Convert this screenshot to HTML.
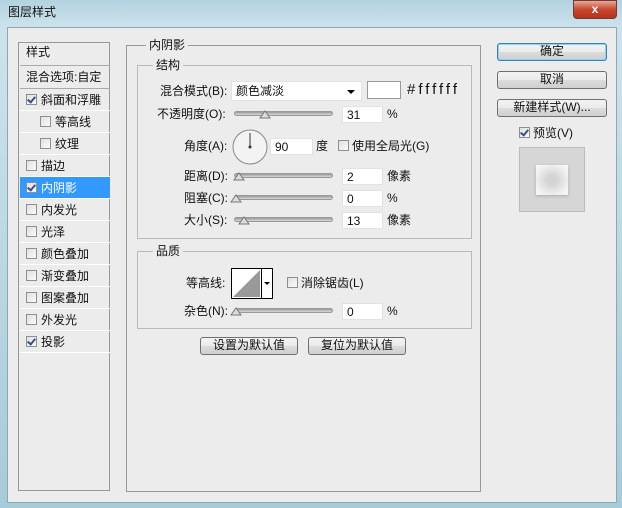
<!DOCTYPE html>
<html><head><meta charset="utf-8"><style>
*{box-sizing:border-box;margin:0;padding:0}
body{width:622px;height:508px;overflow:hidden;position:relative;background:linear-gradient(180deg,#b3d3e0 0,#cde3ec 28px,#a6cbd9 100%);font-family:"Liberation Sans","Noto Sans CJK SC",sans-serif;font-size:12px;color:#111}
.a{position:absolute}
.t{position:absolute;white-space:nowrap;line-height:14px}
.inner{position:absolute;left:7px;top:27px;width:610px;height:476px;background:#ececec;border:1px solid #8fa7b3}
.cb{position:absolute;width:11px;height:11px;border:1px solid #8e8f8f;background:linear-gradient(135deg,#e0e0e0,#fafafa)}
.cb.on::after{content:"";position:absolute;left:2px;top:0px;width:3px;height:6px;border:solid #3a4f8f;border-width:0 2px 2px 0;transform:rotate(40deg)}
.inp{position:absolute;background:#fff;border:1px solid #e2e2e2;height:17px;padding-left:4px;line-height:16px;font-size:12px}
.sl{position:absolute;height:5px;border-radius:3px;background:linear-gradient(#9a9a9a,#d8d8d8);border:1px solid #999}
.btn{position:absolute;border:1px solid #707070;border-radius:3px;background:linear-gradient(#f2f2f2 0,#ebebeb 50%,#dcdcdc 51%,#cfcfcf);text-align:center;line-height:15px}
.grp{position:absolute;border:1px solid #b9b9b9}
.row{position:absolute;left:1px;width:90px;height:22px;border-bottom:1px solid #fff}
</style></head><body>
<div class="t" style="left:8px;top:5px;font-size:12px">图层样式</div>
<div class="a" style="left:573px;top:0;width:44px;height:19px;border-radius:0 0 4px 4px;background:linear-gradient(#e8a99a,#c9462f 50%,#b8321c);border:1px solid #6d3d35;color:#fff;text-align:center;font-weight:bold;line-height:16px">x</div>
<div class="inner"></div>
<div class="a" style="left:18px;top:42px;width:92px;height:449px;border:1px solid #999;background:#ececec">
<div class="row" style="top:0;height:23px;border-bottom:1px solid #aaa"><span class="t" style="left:6px;top:2px">样式</span></div>
<div class="row" style="top:23px;height:23px;border-bottom:1px solid #aaa"><span class="t" style="left:6px;top:4px">混合选项:自定</span></div>
<div class="row" style="top:46px"><span class="cb on" style="left:6px;top:5px"></span><span class="t" style="left:21px;top:4px">斜面和浮雕</span></div>
<div class="row" style="top:68px"><span class="cb" style="left:20px;top:5px"></span><span class="t" style="left:35px;top:4px">等高线</span></div>
<div class="row" style="top:90px"><span class="cb" style="left:20px;top:5px"></span><span class="t" style="left:35px;top:4px">纹理</span></div>
<div class="row" style="top:112px"><span class="cb" style="left:6px;top:5px"></span><span class="t" style="left:21px;top:4px">描边</span></div>
<div class="row" style="top:134px;background:#3399ff;color:#fff"><span class="cb on" style="left:6px;top:5px"></span><span class="t" style="left:21px;top:4px">内阴影</span></div>
<div class="row" style="top:156px"><span class="cb" style="left:6px;top:5px"></span><span class="t" style="left:21px;top:4px">内发光</span></div>
<div class="row" style="top:178px"><span class="cb" style="left:6px;top:5px"></span><span class="t" style="left:21px;top:4px">光泽</span></div>
<div class="row" style="top:200px"><span class="cb" style="left:6px;top:5px"></span><span class="t" style="left:21px;top:4px">颜色叠加</span></div>
<div class="row" style="top:222px"><span class="cb" style="left:6px;top:5px"></span><span class="t" style="left:21px;top:4px">渐变叠加</span></div>
<div class="row" style="top:244px"><span class="cb" style="left:6px;top:5px"></span><span class="t" style="left:21px;top:4px">图案叠加</span></div>
<div class="row" style="top:266px"><span class="cb" style="left:6px;top:5px"></span><span class="t" style="left:21px;top:4px">外发光</span></div>
<div class="row" style="top:288px"><span class="cb on" style="left:6px;top:5px"></span><span class="t" style="left:21px;top:4px">投影</span></div>
</div>
<div class="grp" style="left:126px;top:45px;width:355px;height:447px;border-color:#999"></div>
<div class="t" style="left:146px;top:38px;background:#ececec;padding:0 3px">内阴影</div>
<div class="grp" style="left:137px;top:65px;width:335px;height:174px"></div>
<div class="t" style="left:153px;top:58px;background:#ececec;padding:0 3px">结构</div>
<div class="t" style="left:160px;top:84px">混合模式(B):</div>
<div class="inp" style="left:231px;top:81px;width:131px;height:20px;line-height:19px">颜色减淡<span style="position:absolute;right:6px;top:8px;border:4px solid transparent;border-top:4px solid #000;border-bottom:0"></span></div>
<div class="inp" style="left:367px;top:81px;width:34px;height:18px;border-color:#999"></div>
<div class="t" style="left:407px;top:83px;font-size:15px;letter-spacing:3px">#ffffff</div>
<div class="t" style="left:157px;top:107px">不透明度(O):</div>
<div class="sl" style="left:234px;top:111px;width:99px"></div>
<svg class="a" style="left:259px;top:109px" width="12" height="10"><path d="M1 9 L6 2 L11 9 Z" fill="#ddd" stroke="#777"/></svg>
<div class="inp" style="left:342px;top:106px;width:41px">31</div>
<div class="t" style="left:387px;top:107px">%</div>
<div class="t" style="left:184px;top:139px">角度(A):</div>
<svg class="a" style="left:231px;top:128px" width="38" height="38"><circle cx="19" cy="19" r="17" fill="#f3f3f3" stroke="#888"/><line x1="19" y1="19" x2="19" y2="5" stroke="#333"/><circle cx="19" cy="19" r="1.5" fill="#333"/></svg>
<div class="inp" style="left:270px;top:138px;width:43px">90</div>
<div class="t" style="left:316px;top:139px">度</div>
<span class="cb" style="left:338px;top:140px"></span>
<div class="t" style="left:352px;top:139px">使用全局光(G)</div>
<div class="t" style="left:184px;top:169px">距离(D):</div>
<div class="sl" style="left:234px;top:173px;width:99px"></div>
<svg class="a" style="left:233px;top:171px" width="12" height="10"><path d="M1 9 L6 2 L11 9 Z" fill="#ddd" stroke="#777"/></svg>
<div class="inp" style="left:342px;top:168px;width:41px">2</div>
<div class="t" style="left:387px;top:169px">像素</div>
<div class="t" style="left:184px;top:191px">阻塞(C):</div>
<div class="sl" style="left:234px;top:195px;width:99px"></div>
<svg class="a" style="left:230px;top:193px" width="12" height="10"><path d="M1 9 L6 2 L11 9 Z" fill="#ddd" stroke="#777"/></svg>
<div class="inp" style="left:342px;top:190px;width:41px">0</div>
<div class="t" style="left:387px;top:191px">%</div>
<div class="t" style="left:184px;top:213px">大小(S):</div>
<div class="sl" style="left:234px;top:217px;width:99px"></div>
<svg class="a" style="left:238px;top:215px" width="12" height="10"><path d="M1 9 L6 2 L11 9 Z" fill="#ddd" stroke="#777"/></svg>
<div class="inp" style="left:342px;top:212px;width:41px">13</div>
<div class="t" style="left:387px;top:213px">像素</div>
<div class="grp" style="left:137px;top:251px;width:335px;height:78px"></div>
<div class="t" style="left:153px;top:244px;background:#ececec;padding:0 3px">品质</div>
<div class="t" style="left:186px;top:276px">等高线:</div>
<svg class="a" style="left:231px;top:268px" width="42" height="31"><rect x="0.5" y="0.5" width="41" height="30" fill="#fff" stroke="#000"/><path d="M2 29 L29 2 L29 29 Z" fill="#999"/><line x1="30.5" y1="1" x2="30.5" y2="30" stroke="#000"/><path d="M33 14 L39 14 L36 17 Z" fill="#000"/></svg>
<span class="cb" style="left:287px;top:277px"></span>
<div class="t" style="left:301px;top:276px">消除锯齿(L)</div>
<div class="t" style="left:184px;top:304px">杂色(N):</div>
<div class="sl" style="left:234px;top:308px;width:99px"></div>
<svg class="a" style="left:230px;top:306px" width="12" height="10"><path d="M1 9 L6 2 L11 9 Z" fill="#ddd" stroke="#777"/></svg>
<div class="inp" style="left:342px;top:303px;width:41px">0</div>
<div class="t" style="left:387px;top:304px">%</div>
<div class="btn" style="left:200px;top:337px;width:98px;height:18px">设置为默认值</div>
<div class="btn" style="left:308px;top:337px;width:98px;height:18px">复位为默认值</div>
<div class="btn" style="left:497px;top:43px;width:110px;height:18px;border-color:#3c7fb1;box-shadow:0 0 0 1px #8fd1f0 inset">确定</div>
<div class="btn" style="left:497px;top:71px;width:110px;height:18px">取消</div>
<div class="btn" style="left:497px;top:99px;width:110px;height:18px">新建样式(W)...</div>
<span class="cb on" style="left:519px;top:127px"></span>
<div class="t" style="left:533px;top:126px">预览(V)</div>
<div class="a" style="left:519px;top:147px;width:66px;height:65px;background:#d6d6d6;border:1px solid #bbb"></div>
<div class="a" style="left:536px;top:165px;width:32px;height:30px;background:radial-gradient(#d4d4d4 20%,#f4f4f4 80%);box-shadow:0 1px 3px #aaa"></div>
</body></html>
